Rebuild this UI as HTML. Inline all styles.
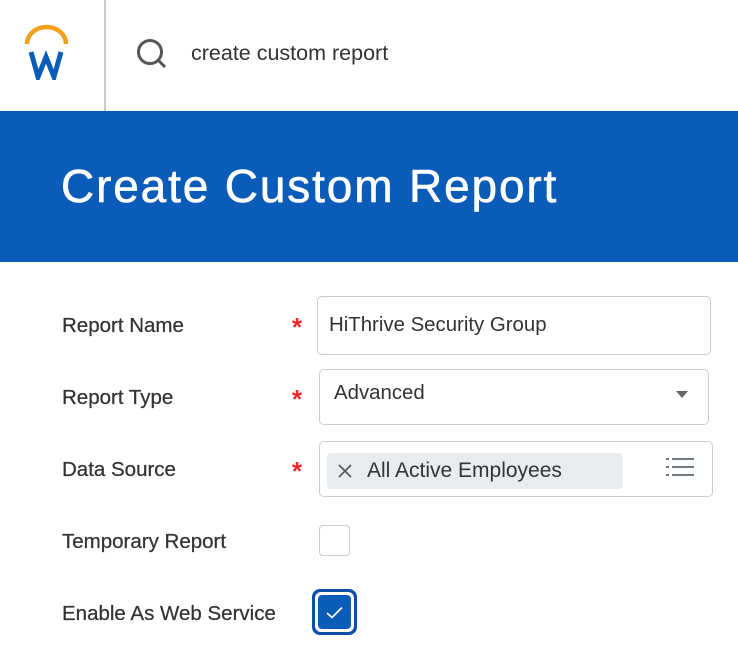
<!DOCTYPE html>
<html><head><style>
body{margin:0;width:738px;height:672px;background:#fff;font-family:"Liberation Sans",sans-serif;position:relative;overflow:hidden;color:#333}
.a{position:absolute}
.lbl{position:absolute;left:62px;font-size:20.5px;color:#333;-webkit-text-stroke:0.25px #333}
.star{position:absolute;left:292px;color:#e8262a;font-size:26px;font-weight:bold}
.box{position:absolute;border:1.5px solid #c9ced3;border-radius:5px;box-sizing:border-box;background:#fff}
</style></head><body>
<div class="a" style="left:104px;top:0;width:2px;height:111px;background:#c5ccd3"></div>
<svg class="a" style="left:22px;top:24px" width="48" height="56" viewBox="0 0 48 56">
<path d="M5 20 A19.5 17 0 0 1 44 20" fill="none" stroke="#f5a01a" stroke-width="4.5"/>
<polyline points="9,28 16,53 24,33 32,53 39,28" fill="none" stroke="#0b5cb8" stroke-width="5" stroke-linejoin="miter"/>
</svg>
<svg class="a" style="left:135px;top:37px" width="34" height="34" viewBox="0 0 34 34">
<circle cx="15" cy="15" r="11.5" fill="none" stroke="#555" stroke-width="3"/>
<line x1="23" y1="23" x2="30" y2="30" stroke="#555" stroke-width="3"/>
</svg>
<div class="a" style="left:191px;top:41px;font-size:21.5px;color:#333">create custom report</div>
<div class="a" style="left:0;top:111px;width:738px;height:151px;background:#0b5cb8"></div>
<div class="a" style="left:61px;top:159px;font-size:46px;color:#fff;letter-spacing:1.85px;-webkit-text-stroke:0.6px #fff">Create Custom Report</div>

<div class="lbl" style="top:314px">Report Name</div>
<div class="star" style="top:312px">*</div>
<div class="box" style="left:317px;top:296px;width:394px;height:59px"></div>
<div class="a" style="left:329px;top:314px;font-size:20.4px;color:#333">HiThrive Security Group</div>

<div class="lbl" style="top:386px">Report Type</div>
<div class="star" style="top:384px">*</div>
<div class="box" style="left:319px;top:369px;width:390px;height:56px"></div>
<div class="a" style="left:334px;top:382px;font-size:20.4px;color:#333">Advanced</div>
<div class="a" style="left:676px;top:391px;width:0;height:0;border-left:6px solid transparent;border-right:6px solid transparent;border-top:7px solid #666"></div>

<div class="lbl" style="top:458px">Data Source</div>
<div class="star" style="top:456px">*</div>
<div class="box" style="left:319px;top:441px;width:394px;height:56px"></div>
<div class="a" style="left:327px;top:453px;width:296px;height:36px;background:#e8ecef;border-radius:4px"></div>
<svg class="a" style="left:337px;top:463px" width="16" height="16"><path d="M2 2L14 14M14 2L2 14" stroke="#555" stroke-width="1.6"/></svg>
<div class="a" style="left:367px;top:459px;font-size:21px;color:#333">All Active Employees</div>
<svg class="a" style="left:666px;top:456px" width="30" height="24"><g fill="#6f7a82"><rect x="0" y="2" width="3" height="2"/><rect x="6" y="2" width="22" height="2"/><rect x="0" y="10" width="3" height="2"/><rect x="6" y="10" width="22" height="2"/><rect x="0" y="18" width="3" height="2"/><rect x="6" y="18" width="22" height="2"/></g></svg>

<div class="lbl" style="top:530px">Temporary Report</div>
<div class="box" style="left:319px;top:525px;width:31px;height:31px;border-radius:4px"></div>

<div class="lbl" style="top:602px">Enable As Web Service</div>
<div class="a" style="left:312px;top:589px;width:45px;height:46px;border-radius:8px;background:#0b4fa8"></div>
<div class="a" style="left:315px;top:592px;width:39px;height:40px;border-radius:6px;background:#fff"></div>
<div class="a" style="left:318px;top:595px;width:33px;height:34px;border-radius:4px;background:#0b5cb8"></div>
<svg class="a" style="left:324px;top:602px" width="22" height="20"><path d="M3 11L8 15.5L18 5.5" fill="none" stroke="#fff" stroke-width="1.6"/></svg>
</body></html>
